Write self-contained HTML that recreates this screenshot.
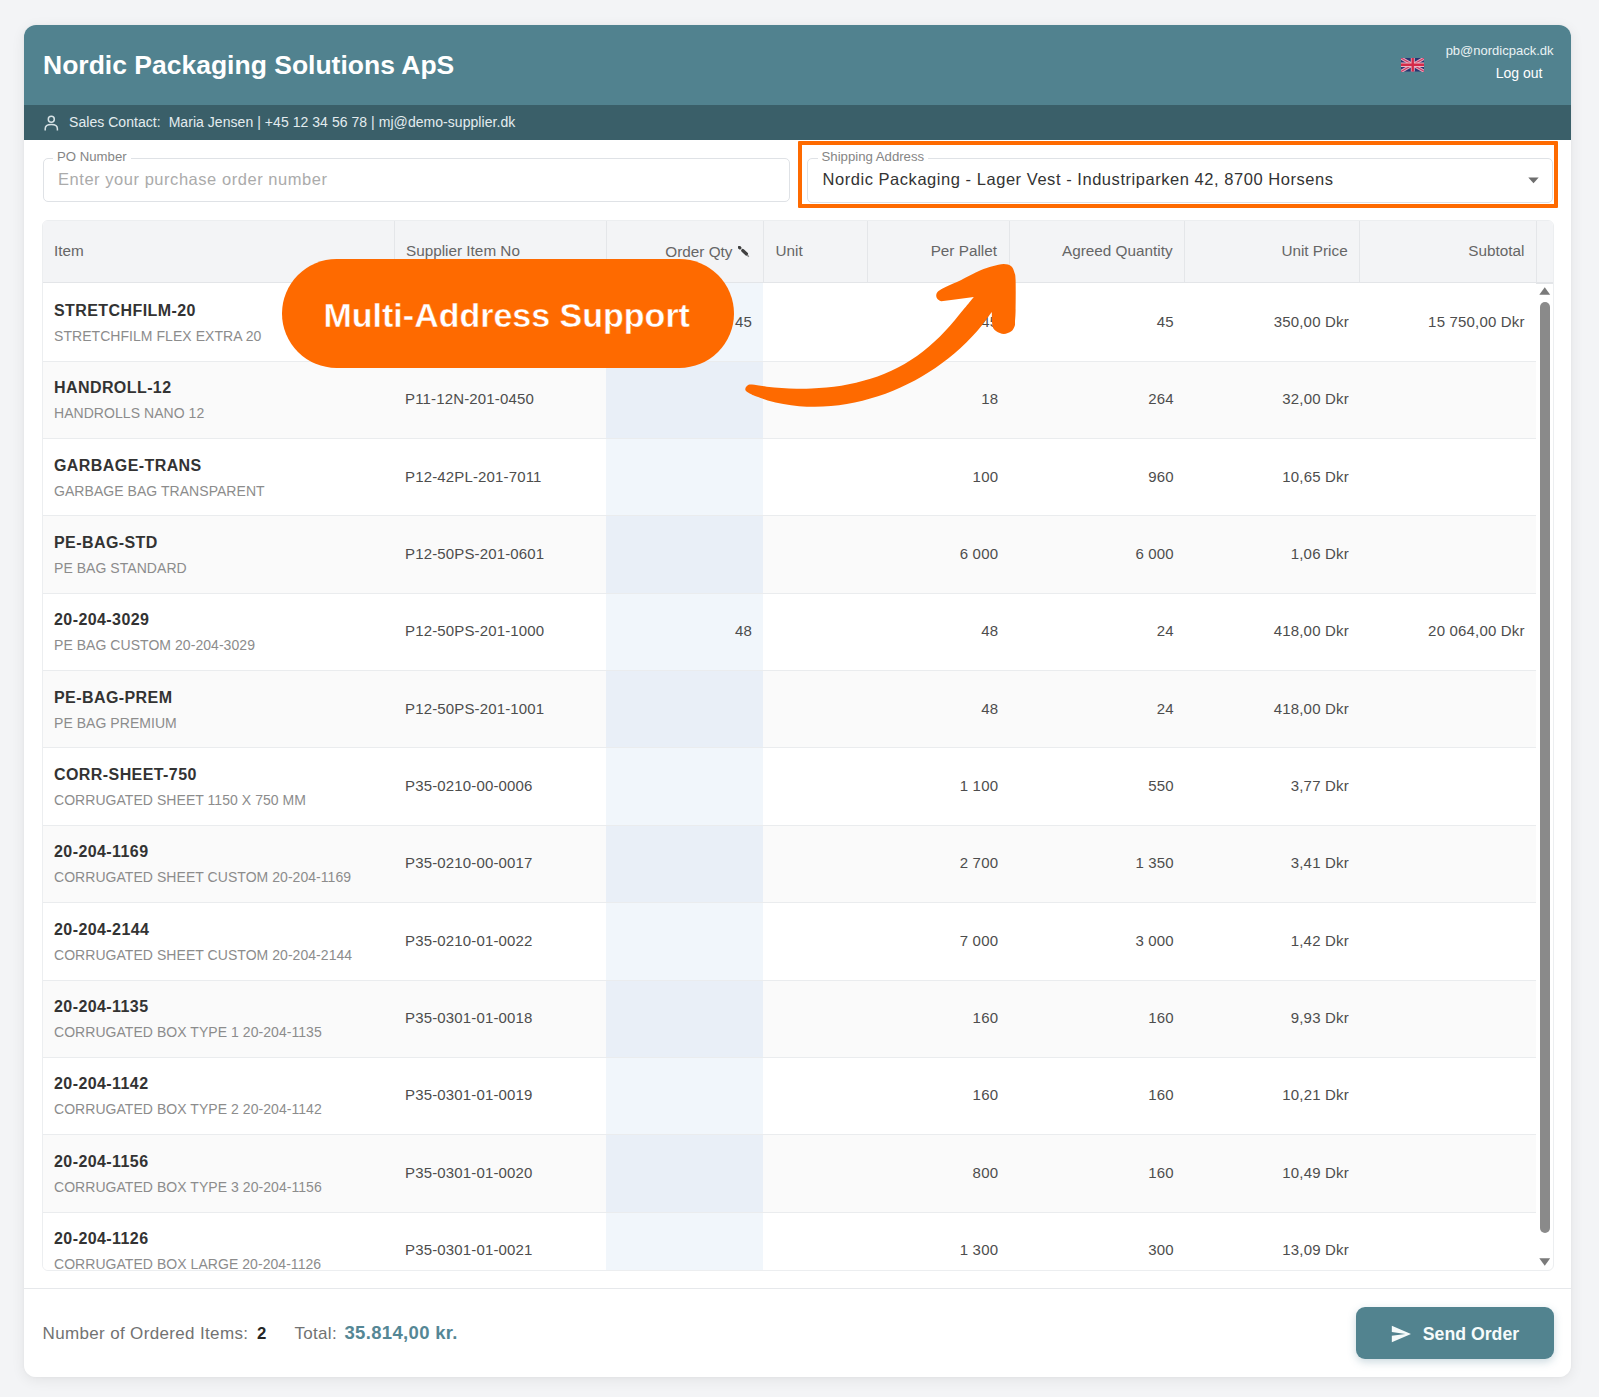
<!DOCTYPE html><html><head><meta charset="utf-8"><style>
*{box-sizing:border-box;margin:0;padding:0}
html,body{width:1599px;height:1397px;overflow:hidden;background:#f3f4f6;font-family:"Liberation Sans",sans-serif}
.abs{position:absolute;white-space:nowrap}
.card{position:absolute;left:24.3px;top:25px;width:1547px;height:1352.4px;background:linear-gradient(#51828f 0,#51828f 80px,#3a5f69 80px,#3a5f69 115px,#fff 115px);border-radius:12px;box-shadow:0 3px 14px rgba(0,0,0,0.075),0 0 3px rgba(0,0,0,0.04)}
.hdr{position:absolute;left:0;top:0;width:100%;height:80px;background:#51828f}
.band{position:absolute;left:0;top:80px;width:100%;height:34.5px;background:#3a5f69}
.fld{position:absolute;border:1px solid #dfe2e6;border-radius:5px;background:#fff}
.lbl{position:absolute;font-size:13.2px;color:#858585;background:#fff;padding:0 4px;white-space:nowrap}
.tbl{position:absolute;left:42px;top:219.5px;width:1512px;height:1051px;border:1px solid #eceef0;border-radius:6px;overflow:hidden;background:#fff}
.hbg{position:absolute;left:0;top:0;width:100%;height:63px;background:#f3f4f6;border-bottom:2px solid #e3e5e8}
.ht{position:absolute;top:21.3px;font-size:15.3px;color:#666;white-space:nowrap}
.vd{position:absolute;top:0;width:1px;height:61px;background:#e4e6e9}
.row{position:absolute;left:0;width:1493.4px;border-bottom:1px solid #eaecee}
.code{position:absolute;left:11px;font-size:16px;letter-spacing:0.42px;font-weight:bold;color:#333;white-space:nowrap}
.sub{position:absolute;left:11px;font-size:14px;letter-spacing:0.05px;color:#8c8c8c;white-space:nowrap}
.cell{position:absolute;font-size:15px;letter-spacing:0.18px;color:#4d4d4d;white-space:nowrap}
</style></head><body>
<div class="card">
</div>
<div class="abs" style="left:43px;top:50px;font-size:26.5px;font-weight:bold;color:#fff">Nordic Packaging Solutions ApS</div>
<svg class="abs" style="left:1400.5px;top:58px" width="23.5" height="13.5" viewBox="0 0 60 30" preserveAspectRatio="none"><defs><filter id="fb" x="-5%" y="-5%" width="110%" height="110%"><feGaussianBlur stdDeviation="0.9"/></filter></defs><g filter="url(#fb)"><rect width="60" height="30" fill="#2a3470"/><path d="M0,0 L60,30 M60,0 L0,30" stroke="#e8a8bc" stroke-width="7"/><path d="M0,0 L60,30 M60,0 L0,30" stroke="#c83a64" stroke-width="3"/><path d="M30,0 V30 M0,15 H60" stroke="#eab4c4" stroke-width="10"/><path d="M30,0 V30 M0,15 H60" stroke="#d42a48" stroke-width="6"/></g></svg>
<div class="abs" style="right:45.5px;top:43px;font-size:13px;color:#eaf2f4">pb@nordicpack.dk</div>
<div class="abs" style="right:56.5px;top:65.2px;font-size:14px;color:#fff">Log out</div>
<svg class="abs" style="left:44px;top:115px" width="15" height="16" viewBox="0 0 15 16"><circle cx="7.3" cy="4.3" r="3" fill="none" stroke="#d6e2e5" stroke-width="1.5"/><path d="M1.2,15.6 V13.8 C1.2,10.8 4,9.6 7.3,9.6 C10.6,9.6 13.4,10.8 13.4,13.8 V15.6" fill="none" stroke="#d6e2e5" stroke-width="1.5"/></svg>
<div class="abs" style="left:69px;top:113.5px;font-size:14px;letter-spacing:0.05px;color:#e3ecef">Sales Contact:&nbsp; Maria Jensen | +45 12 34 56 78 | mj@demo-supplier.dk</div>
<div class="fld" style="left:42.5px;top:157.5px;width:747px;height:44px"></div>
<div class="lbl" style="left:53px;top:148.5px">PO Number</div>
<div class="abs" style="left:58px;top:170px;font-size:16.5px;letter-spacing:0.54px;color:#ababab">Enter your purchase order number</div>
<div class="fld" style="left:807px;top:157.5px;width:746px;height:45px"></div>
<div class="lbl" style="left:817.5px;top:148.5px">Shipping Address</div>
<div class="abs" style="left:822.5px;top:170px;font-size:16.5px;letter-spacing:0.54px;color:#333">Nordic Packaging - Lager Vest - Industriparken 42, 8700 Horsens</div>
<svg class="abs" style="left:1527.5px;top:177.3px" width="11" height="7" viewBox="0 0 11 7"><path d="M0.3,0.5 L10.7,0.5 L5.5,6.3 Z" fill="#6e6e6e"/></svg>
<div class="abs" style="left:797.5px;top:140.5px;width:760px;height:67.5px;border:4.4px solid #fe6a00;border-radius:1px"></div>
<div class="tbl">
<div class="hbg"></div>
<div class="ht" style="left:11px">Item</div>
<div class="ht" style="left:363px">Supplier Item No</div>
<div class="ht" style="left:563.2px;width:126.3px;text-align:right;top:22.8px">Order Qty</div>
<svg class="abs" style="left:695.4px;top:25.7px" width="14" height="14" viewBox="0 0 14 14"><path d="M1.3,1.3 L1.9,1.9" stroke="#404040" stroke-width="3.1" stroke-linecap="round"/><path d="M4.7,4.5 L8.5,8" stroke="#404040" stroke-width="3.1" stroke-linecap="round"/><path d="M9.2,9 L10.8,10.8" stroke="#8a8a8a" stroke-width="1.3"/></svg>
<div class="ht" style="left:732.5px">Unit</div>
<div class="ht" style="left:824.6px;width:129.4px;text-align:right">Per Pallet</div>
<div class="ht" style="left:966px;width:163.6px;text-align:right">Agreed Quantity</div>
<div class="ht" style="left:1141.6px;width:163.1px;text-align:right">Unit Price</div>
<div class="ht" style="left:1316.7px;width:164.7px;text-align:right">Subtotal</div>
<div class="vd" style="left:350.5px"></div>
<div class="vd" style="left:562.7px"></div>
<div class="vd" style="left:720.0px"></div>
<div class="vd" style="left:824.1px"></div>
<div class="vd" style="left:965.5px"></div>
<div class="vd" style="left:1141.1px"></div>
<div class="vd" style="left:1316.2px"></div>
<div class="vd" style="left:1492.9px"></div>
<div class="row" style="top:62.7px;height:78.52px;background:#ffffff"><div class="abs" style="left:563.2px;top:0;width:157.3px;height:100%;background:#f1f6fb"></div><div class="code" style="top:18.67px">STRETCHFILM-20</div><div class="sub" style="top:44.77px">STRETCHFILM FLEX EXTRA 20</div><div class="cell" style="left:362px;top:29.67px;letter-spacing:0.15px">P11-20SF-201-0100</div><div class="cell" style="left:563.2px;top:29.67px;width:145.8px;text-align:right">45</div><div class="cell" style="left:824.6px;top:29.67px;width:130.6px;text-align:right">45</div><div class="cell" style="left:966px;top:29.67px;width:164.9px;text-align:right">45</div><div class="cell" style="left:1141.6px;top:29.67px;width:164.3px;text-align:right">350,00 Dkr</div><div class="cell" style="left:1316.7px;top:29.67px;width:165.0px;text-align:right">15 750,00 Dkr</div></div>
<div class="row" style="top:141.22px;height:77.35px;background:#fafafa"><div class="abs" style="left:563.2px;top:0;width:157.3px;height:100%;background:#e9eff7"></div><div class="code" style="top:17.5px">HANDROLL-12</div><div class="sub" style="top:43.6px">HANDROLLS NANO 12</div><div class="cell" style="left:362px;top:28.5px;letter-spacing:0.15px">P11-12N-201-0450</div><div class="cell" style="left:824.6px;top:28.5px;width:130.6px;text-align:right">18</div><div class="cell" style="left:966px;top:28.5px;width:164.9px;text-align:right">264</div><div class="cell" style="left:1141.6px;top:28.5px;width:164.3px;text-align:right">32,00 Dkr</div></div>
<div class="row" style="top:218.57px;height:77.35px;background:#ffffff"><div class="abs" style="left:563.2px;top:0;width:157.3px;height:100%;background:#f1f6fb"></div><div class="code" style="top:17.5px">GARBAGE-TRANS</div><div class="sub" style="top:43.6px">GARBAGE BAG TRANSPARENT</div><div class="cell" style="left:362px;top:28.5px;letter-spacing:0.15px">P12-42PL-201-7011</div><div class="cell" style="left:824.6px;top:28.5px;width:130.6px;text-align:right">100</div><div class="cell" style="left:966px;top:28.5px;width:164.9px;text-align:right">960</div><div class="cell" style="left:1141.6px;top:28.5px;width:164.3px;text-align:right">10,65 Dkr</div></div>
<div class="row" style="top:295.92px;height:77.35px;background:#fafafa"><div class="abs" style="left:563.2px;top:0;width:157.3px;height:100%;background:#e9eff7"></div><div class="code" style="top:17.5px">PE-BAG-STD</div><div class="sub" style="top:43.6px">PE BAG STANDARD</div><div class="cell" style="left:362px;top:28.5px;letter-spacing:0.15px">P12-50PS-201-0601</div><div class="cell" style="left:824.6px;top:28.5px;width:130.6px;text-align:right">6 000</div><div class="cell" style="left:966px;top:28.5px;width:164.9px;text-align:right">6 000</div><div class="cell" style="left:1141.6px;top:28.5px;width:164.3px;text-align:right">1,06 Dkr</div></div>
<div class="row" style="top:373.27px;height:77.35px;background:#ffffff"><div class="abs" style="left:563.2px;top:0;width:157.3px;height:100%;background:#f1f6fb"></div><div class="code" style="top:17.5px">20-204-3029</div><div class="sub" style="top:43.6px">PE BAG CUSTOM 20-204-3029</div><div class="cell" style="left:362px;top:28.5px;letter-spacing:0.15px">P12-50PS-201-1000</div><div class="cell" style="left:563.2px;top:28.5px;width:145.8px;text-align:right">48</div><div class="cell" style="left:824.6px;top:28.5px;width:130.6px;text-align:right">48</div><div class="cell" style="left:966px;top:28.5px;width:164.9px;text-align:right">24</div><div class="cell" style="left:1141.6px;top:28.5px;width:164.3px;text-align:right">418,00 Dkr</div><div class="cell" style="left:1316.7px;top:28.5px;width:165.0px;text-align:right">20 064,00 Dkr</div></div>
<div class="row" style="top:450.62px;height:77.35px;background:#fafafa"><div class="abs" style="left:563.2px;top:0;width:157.3px;height:100%;background:#e9eff7"></div><div class="code" style="top:17.5px">PE-BAG-PREM</div><div class="sub" style="top:43.6px">PE BAG PREMIUM</div><div class="cell" style="left:362px;top:28.5px;letter-spacing:0.15px">P12-50PS-201-1001</div><div class="cell" style="left:824.6px;top:28.5px;width:130.6px;text-align:right">48</div><div class="cell" style="left:966px;top:28.5px;width:164.9px;text-align:right">24</div><div class="cell" style="left:1141.6px;top:28.5px;width:164.3px;text-align:right">418,00 Dkr</div></div>
<div class="row" style="top:527.97px;height:77.35px;background:#ffffff"><div class="abs" style="left:563.2px;top:0;width:157.3px;height:100%;background:#f1f6fb"></div><div class="code" style="top:17.5px">CORR-SHEET-750</div><div class="sub" style="top:43.6px">CORRUGATED SHEET 1150 X 750 MM</div><div class="cell" style="left:362px;top:28.5px;letter-spacing:0.15px">P35-0210-00-0006</div><div class="cell" style="left:824.6px;top:28.5px;width:130.6px;text-align:right">1 100</div><div class="cell" style="left:966px;top:28.5px;width:164.9px;text-align:right">550</div><div class="cell" style="left:1141.6px;top:28.5px;width:164.3px;text-align:right">3,77 Dkr</div></div>
<div class="row" style="top:605.32px;height:77.35px;background:#fafafa"><div class="abs" style="left:563.2px;top:0;width:157.3px;height:100%;background:#e9eff7"></div><div class="code" style="top:17.5px">20-204-1169</div><div class="sub" style="top:43.6px">CORRUGATED SHEET CUSTOM 20-204-1169</div><div class="cell" style="left:362px;top:28.5px;letter-spacing:0.15px">P35-0210-00-0017</div><div class="cell" style="left:824.6px;top:28.5px;width:130.6px;text-align:right">2 700</div><div class="cell" style="left:966px;top:28.5px;width:164.9px;text-align:right">1 350</div><div class="cell" style="left:1141.6px;top:28.5px;width:164.3px;text-align:right">3,41 Dkr</div></div>
<div class="row" style="top:682.67px;height:77.35px;background:#ffffff"><div class="abs" style="left:563.2px;top:0;width:157.3px;height:100%;background:#f1f6fb"></div><div class="code" style="top:17.5px">20-204-2144</div><div class="sub" style="top:43.6px">CORRUGATED SHEET CUSTOM 20-204-2144</div><div class="cell" style="left:362px;top:28.5px;letter-spacing:0.15px">P35-0210-01-0022</div><div class="cell" style="left:824.6px;top:28.5px;width:130.6px;text-align:right">7 000</div><div class="cell" style="left:966px;top:28.5px;width:164.9px;text-align:right">3 000</div><div class="cell" style="left:1141.6px;top:28.5px;width:164.3px;text-align:right">1,42 Dkr</div></div>
<div class="row" style="top:760.02px;height:77.35px;background:#fafafa"><div class="abs" style="left:563.2px;top:0;width:157.3px;height:100%;background:#e9eff7"></div><div class="code" style="top:17.5px">20-204-1135</div><div class="sub" style="top:43.6px">CORRUGATED BOX TYPE 1 20-204-1135</div><div class="cell" style="left:362px;top:28.5px;letter-spacing:0.15px">P35-0301-01-0018</div><div class="cell" style="left:824.6px;top:28.5px;width:130.6px;text-align:right">160</div><div class="cell" style="left:966px;top:28.5px;width:164.9px;text-align:right">160</div><div class="cell" style="left:1141.6px;top:28.5px;width:164.3px;text-align:right">9,93 Dkr</div></div>
<div class="row" style="top:837.37px;height:77.35px;background:#ffffff"><div class="abs" style="left:563.2px;top:0;width:157.3px;height:100%;background:#f1f6fb"></div><div class="code" style="top:17.5px">20-204-1142</div><div class="sub" style="top:43.6px">CORRUGATED BOX TYPE 2 20-204-1142</div><div class="cell" style="left:362px;top:28.5px;letter-spacing:0.15px">P35-0301-01-0019</div><div class="cell" style="left:824.6px;top:28.5px;width:130.6px;text-align:right">160</div><div class="cell" style="left:966px;top:28.5px;width:164.9px;text-align:right">160</div><div class="cell" style="left:1141.6px;top:28.5px;width:164.3px;text-align:right">10,21 Dkr</div></div>
<div class="row" style="top:914.72px;height:77.35px;background:#fafafa"><div class="abs" style="left:563.2px;top:0;width:157.3px;height:100%;background:#e9eff7"></div><div class="code" style="top:17.5px">20-204-1156</div><div class="sub" style="top:43.6px">CORRUGATED BOX TYPE 3 20-204-1156</div><div class="cell" style="left:362px;top:28.5px;letter-spacing:0.15px">P35-0301-01-0020</div><div class="cell" style="left:824.6px;top:28.5px;width:130.6px;text-align:right">800</div><div class="cell" style="left:966px;top:28.5px;width:164.9px;text-align:right">160</div><div class="cell" style="left:1141.6px;top:28.5px;width:164.3px;text-align:right">10,49 Dkr</div></div>
<div class="row" style="top:992.07px;height:77.35px;background:#ffffff"><div class="abs" style="left:563.2px;top:0;width:157.3px;height:100%;background:#f1f6fb"></div><div class="code" style="top:17.5px">20-204-1126</div><div class="sub" style="top:43.6px">CORRUGATED BOX LARGE 20-204-1126</div><div class="cell" style="left:362px;top:28.5px;letter-spacing:0.15px">P35-0301-01-0021</div><div class="cell" style="left:824.6px;top:28.5px;width:130.6px;text-align:right">1 300</div><div class="cell" style="left:966px;top:28.5px;width:164.9px;text-align:right">300</div><div class="cell" style="left:1141.6px;top:28.5px;width:164.3px;text-align:right">13,09 Dkr</div></div>
<svg class="abs" style="left:1496px;top:66.5px" width="11.5" height="8" viewBox="0 0 11.5 8"><path d="M0.3,7.8 L5.75,0.2 L11.2,7.8Z" fill="#7a7a7a"/></svg>
<div class="abs" style="left:1496.8px;top:81.7px;width:9.8px;height:930.6px;background:#8a8a8a;border-radius:5px"></div>
<svg class="abs" style="left:1496px;top:1037.0px" width="11.5" height="8" viewBox="0 0 11.5 8"><path d="M0.3,0.2 L5.75,7.8 L11.2,0.2Z" fill="#7a7a7a"/></svg>
</div>
<div class="abs" style="left:24.3px;top:1287.7px;width:1547px;height:1.5px;background:#e6e8eb"></div>
<div class="abs" style="left:42.5px;top:1323.5px;font-size:17px;letter-spacing:0.35px;color:#727272">Number of Ordered Items:</div>
<div class="abs" style="left:257px;top:1323.5px;font-size:16.8px;font-weight:bold;color:#262626">2</div>
<div class="abs" style="left:294.5px;top:1323.5px;font-size:17px;letter-spacing:0.3px;color:#727272">Total:</div>
<div class="abs" style="left:344.5px;top:1322px;font-size:18.5px;letter-spacing:0.33px;font-weight:bold;color:#558795">35.814,00 kr.</div>
<div class="abs" style="left:1355.6px;top:1307.3px;width:198.3px;height:52px;background:#52838f;border-radius:9px;box-shadow:0 3px 8px rgba(70,120,140,0.28)"></div>
<svg class="abs" style="left:1390.4px;top:1322.6px" width="21.9" height="21.9" viewBox="0 0 24 24"><path d="M2.01,21 L23,12 L2.01,3 L2,10 L17,12 L2,14 Z" fill="#f4fafa"/></svg>
<div class="abs" style="left:1422.8px;top:1323.6px;font-size:17.7px;font-weight:bold;color:#f6fbfb">Send Order</div>
<div class="abs" style="left:281.6px;top:258.8px;width:452px;height:109.3px;background:#fe6a00;border-radius:55px"></div>
<div class="abs" style="left:323.5px;top:295.5px;font-size:34px;font-weight:bold;color:#fff;-webkit-text-stroke:0.45px #fe6a00">Multi-Address Support</div>
<svg class="abs" style="left:0;top:0" width="1599" height="1397"><path d="M752.50,395.00 C751.55,394.47 748.00,392.80 746.80,391.80 C745.60,390.80 745.18,390.03 745.30,389.00 C745.42,387.97 746.38,386.33 747.50,385.60 C748.62,384.87 748.78,384.42 752.00,384.60 C755.22,384.78 761.90,386.12 766.84,386.69 C771.79,387.26 776.71,387.71 781.66,388.04 C786.61,388.37 791.56,388.57 796.53,388.65 C801.49,388.73 806.48,388.69 811.46,388.50 C816.44,388.32 821.44,388.01 826.41,387.53 C831.39,387.06 836.37,386.45 841.31,385.66 C846.25,384.87 851.18,383.93 856.04,382.80 C860.91,381.67 865.74,380.37 870.49,378.87 C875.23,377.37 879.93,375.68 884.51,373.80 C889.10,371.91 893.61,369.82 897.99,367.54 C902.38,365.25 906.67,362.76 910.83,360.08 C914.99,357.40 919.03,354.51 922.94,351.46 C926.85,348.41 930.64,345.16 934.30,341.78 C937.97,338.40 941.50,334.83 944.93,331.20 C948.37,327.56 951.67,323.75 954.93,319.95 C958.18,316.15 961.31,312.22 964.45,308.37 C967.58,304.53 972.20,298.81 973.75,296.90 L955,299.4 L941.25,301.25 C940.62,300.88 938.33,300.04 937.50,299.00 C936.67,297.96 936.08,296.33 936.25,295.00 C936.42,293.67 936.94,292.35 938.50,291.00 C940.06,289.65 941.81,288.73 945.60,286.90 C949.39,285.07 955.52,282.72 961.25,280.00 C966.98,277.28 974.79,272.89 980.00,270.60 C985.21,268.31 988.54,267.34 992.50,266.25 C996.46,265.16 1000.62,264.06 1003.75,264.06 C1006.88,264.06 1009.48,264.84 1011.25,266.25 C1013.02,267.66 1013.67,270.21 1014.40,272.50 C1015.12,274.79 1015.40,273.75 1015.60,280.00 C1015.80,286.25 1015.70,303.02 1015.60,310.00 C1015.50,316.98 1015.15,319.23 1015.00,321.90 C1014.85,324.57 1015.32,324.43 1014.70,326.00 C1014.08,327.57 1013.12,329.98 1011.30,331.30 C1009.48,332.62 1006.30,333.90 1003.80,333.90 C1001.30,333.90 998.18,332.62 996.30,331.30 C994.42,329.98 993.25,329.20 992.50,326.00 C991.75,322.80 991.92,314.42 991.80,312.10 C990.19,314.25 985.51,320.85 982.16,325.01 C978.80,329.16 975.29,333.18 971.65,337.05 C968.01,340.93 964.22,344.66 960.31,348.24 C956.41,351.83 952.36,355.27 948.19,358.56 C944.03,361.85 939.74,365.00 935.34,367.99 C930.95,370.98 926.43,373.82 921.82,376.50 C917.21,379.18 912.49,381.71 907.70,384.07 C902.90,386.43 898.01,388.63 893.05,390.65 C888.10,392.67 883.05,394.53 877.97,396.20 C872.88,397.86 867.72,399.36 862.52,400.65 C857.33,401.94 852.08,403.06 846.82,403.95 C841.56,404.85 836.25,405.56 830.95,406.03 C825.65,406.51 820.32,406.78 815.01,406.81 C809.70,406.83 804.38,406.64 799.09,406.19 C793.81,405.74 788.53,405.05 783.31,404.09 C778.08,403.12 772.88,401.91 767.74,400.40 C762.61,398.88 755.04,395.90 752.50,395.00 Z" fill="#fe6a00"/></svg>
</body></html>
